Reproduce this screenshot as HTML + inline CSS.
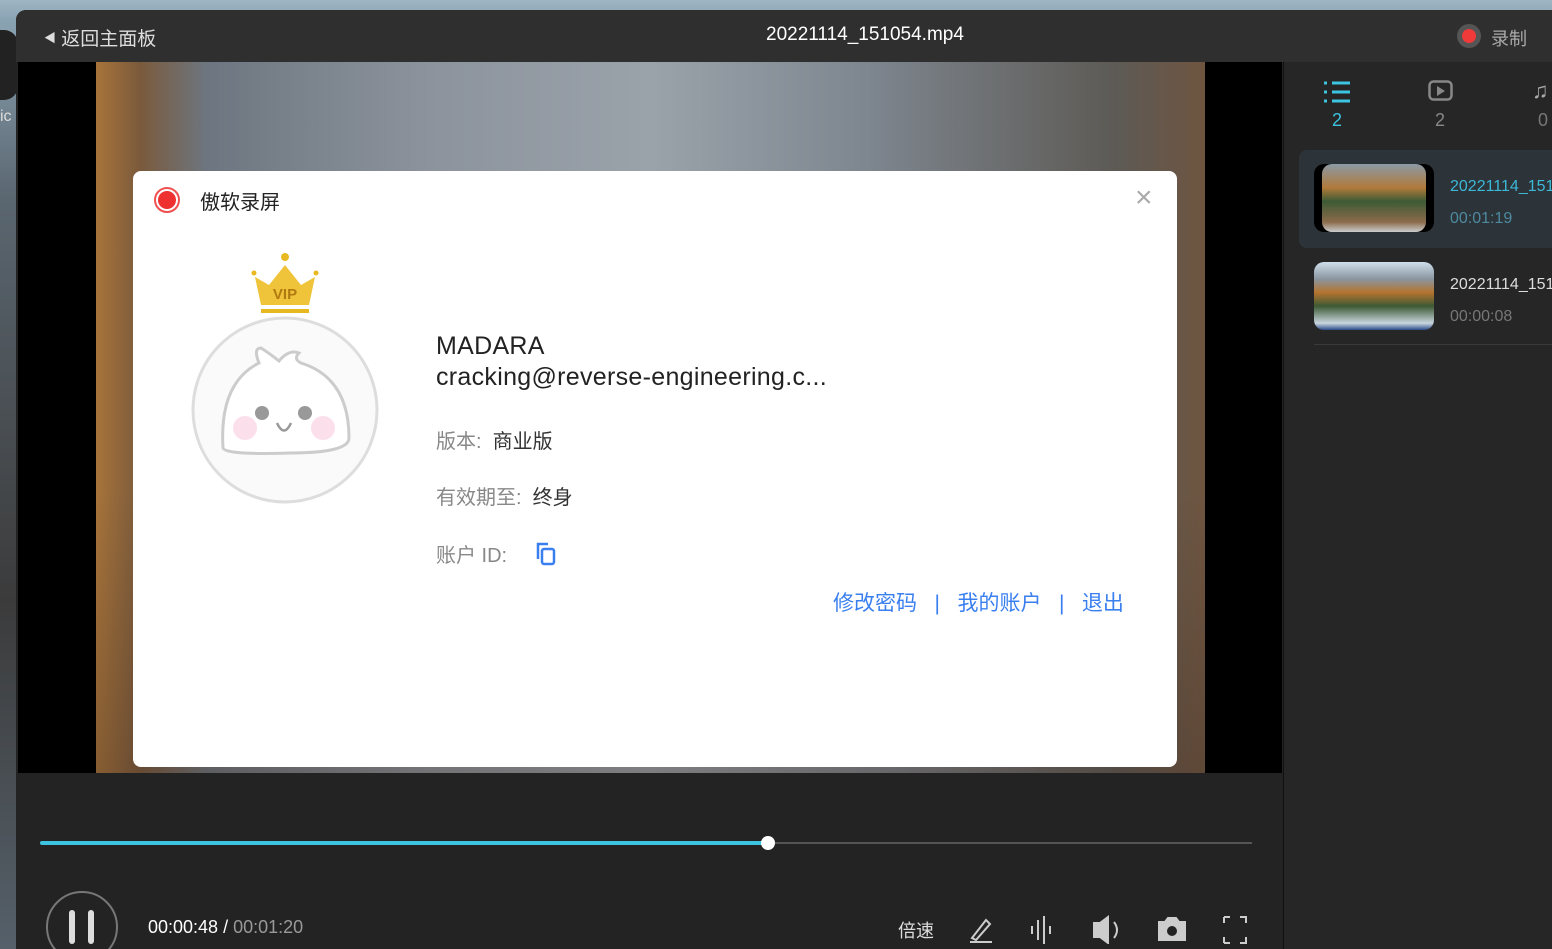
<!DOCTYPE html>
<html><head><meta charset="utf-8"><style>
*{margin:0;padding:0;box-sizing:border-box}
body{width:1552px;height:949px;overflow:hidden;position:relative;font-family:"Liberation Sans","Noto Sans CJK SC",sans-serif;background:linear-gradient(180deg,#9fb6c4 0,#8aa3b2 20px,#5a6670 200px,#3b3b3b 600px,#55606a 949px)}
.abs{position:absolute}
.win{left:16px;top:10px;width:1536px;height:939px;background:#232323;border-radius:10px 0 0 0;overflow:hidden}
.title{left:0;top:0;width:1536px;height:52px;background:#2f2f2f}
.video{left:2px;top:52px;width:1264px;height:711px;background:#000}
.img{left:78px;top:0;width:1109px;height:711px;background:
linear-gradient(180deg,rgba(0,0,0,0) 0,rgba(0,0,0,0) 60%,rgba(60,40,30,.3) 100%),
linear-gradient(90deg,#a8743a 0,#7a5a3c 4%,#6d7680 10%,#8c939c 30%,#9aa2aa 50%,#7d858e 70%,#5d5a55 92%,#6e5540 100%);}
.side{left:1267px;top:52px;width:269px;height:887px;background:#262626;border-left:1px solid #111}
.modal{left:133px;top:171px;width:1044px;height:596px;background:#fff;border-radius:8px}
.t{white-space:nowrap}
</style></head><body>
<div class="abs" style="left:0;top:30px;width:18px;height:70px;background:#222;border-radius:0 14px 14px 0"></div>
<div class="abs t" style="left:0;top:108px;color:#ddd;font-size:16px">ic</div>
<div class="abs win">
 <div class="abs title">
  <div class="abs t" style="left:28px;top:14px;color:#ddd;font-size:19px"><span style="font-size:12px;vertical-align:3px">◀</span> 返回主面板</div>
  <div class="abs t" style="left:750px;top:14px;color:#fff;font-size:19px">20221114_151054.mp4</div>
  <div class="abs" style="left:1441px;top:14px;width:24px;height:24px;border-radius:50%;background:#555"></div>
  <div class="abs" style="left:1446px;top:19px;width:14px;height:14px;border-radius:50%;background:#f03a3a"></div>
  <div class="abs t" style="left:1475px;top:15px;color:#aaa;font-size:18px">录制</div>
 </div>
 <div class="abs video"><div class="abs img"></div></div>
 <div class="abs" style="left:24px;top:831px;width:728px;height:4px;background:#3cc4e0;border-radius:2px"></div>
 <div class="abs" style="left:752px;top:832px;width:484px;height:2px;background:#555"></div>
 <div class="abs" style="left:745px;top:826px;width:14px;height:14px;border-radius:50%;background:#fff"></div>
 <div class="abs" style="left:30px;top:881px;width:72px;height:72px;border-radius:50%;border:2px solid #777"></div>
 <div class="abs" style="left:53px;top:900px;width:6px;height:34px;background:#ddd;border-radius:3px"></div>
 <div class="abs" style="left:72px;top:900px;width:6px;height:34px;background:#ddd;border-radius:3px"></div>
 <div class="abs t" style="left:132px;top:907px;font-size:18px;color:#fff">00:00:48 / <span style="color:#999">00:01:20</span></div>
 <div class="abs t" style="left:882px;top:907px;font-size:18px;color:#ddd">倍速</div>
 <svg class="abs" style="left:950px;top:900px" width="290" height="34" viewBox="0 0 290 34" fill="none" stroke="#ccc" stroke-width="2">
  <path d="M6 28 L20 10 L24 14 L10 30 Z M4 32 H26"/>
  <path d="M72 10 V30 M78 6 V34 M66 16 V24 M84 16 V24"/>
  <path d="M128 13 H134 L142 7 V33 L134 27 H128 Z" fill="#ccc"/><path d="M148 12 Q154 20 148 28"/>
  <path d="M193 12 H199 L202 8 H210 L213 12 H219 V30 H193 Z" fill="#ccc"/><circle cx="206" cy="21" r="5" fill="#232323" stroke="none"/>
  <path d="M258 7 H264 M258 7 V13 M274 7 H280 V13 M258 33 H264 M258 33 V27 M280 27 V33 H274"/>
 </svg>
 <div class="abs side">
  <svg class="abs" style="left:40px;top:18px" width="30" height="24" viewBox="0 0 30 24" stroke="#3cc4e0" stroke-width="3"><path d="M0 3H3M8 3H26M0 12H3M8 12H26M0 21H3M8 21H26"/></svg>
  <div class="abs t" style="left:48px;top:48px;color:#3cc4e0;font-size:18px">2</div>
  <svg class="abs" style="left:144px;top:18px" width="26" height="22" viewBox="0 0 26 22"><rect x="1.5" y="1.5" width="22" height="18" rx="4" fill="none" stroke="#888" stroke-width="2.5"/><path d="M9 6L17 11L9 16Z" fill="#888"/></svg>
  <div class="abs t" style="left:151px;top:48px;color:#888;font-size:18px">2</div>
  <div class="abs t" style="left:248px;top:16px;color:#aaa;font-size:22px">♫</div>
  <div class="abs t" style="left:254px;top:48px;color:#777;font-size:18px">0</div>
  <div class="abs" style="left:15px;top:88px;width:260px;height:98px;background:#2d3439;border-radius:8px"></div>
  <div class="abs" style="left:30px;top:102px;width:120px;height:68px;border-radius:10px;background:#000"></div>
  <div class="abs" style="left:38px;top:102px;width:104px;height:68px;border-radius:10px;background:linear-gradient(180deg,#8c9aa6 0,#b07a3a 35%,#3d5a35 55%,#8a6a4a 85%,#ccc 100%)"></div>
  <div class="abs t" style="left:166px;top:116px;color:#3cb8d8;font-size:16px">20221114_151</div>
  <div class="abs t" style="left:166px;top:148px;color:#4d8aa0;font-size:16px">00:01:19</div>
  <div class="abs" style="left:30px;top:200px;width:120px;height:68px;border-radius:10px;background:linear-gradient(180deg,#cfe0ec 0,#8a95a0 25%,#b5742e 45%,#3d5a35 65%,#c8d5de 90%,#2a4a8a 100%)"></div>
  <div class="abs t" style="left:166px;top:214px;color:#ddd;font-size:16px">20221114_151</div>
  <div class="abs t" style="left:166px;top:246px;color:#777;font-size:16px">00:00:08</div>
  <div class="abs" style="left:30px;top:282px;width:240px;height:1px;background:#3a3a3a"></div>
 </div>
</div>
<div class="abs modal">
 <div class="abs" style="left:21px;top:16px;width:26px;height:26px;border-radius:50%;border:2px solid #f05050"></div>
 <div class="abs" style="left:25px;top:20px;width:18px;height:18px;border-radius:50%;background:#ee3030"></div>
 <div class="abs t" style="left:67px;top:15px;font-size:20px;color:#222">傲软录屏</div>
 <div class="abs t" style="left:1002px;top:10px;font-size:30px;color:#aaa;font-weight:300">×</div>
 <svg class="abs" style="left:56px;top:82px" width="192" height="252" viewBox="0 0 192 252">
  <circle cx="96" cy="157" r="92" fill="#fafafa" stroke="#ddd" stroke-width="3"/>
  <path d="M34 195 Q30 130 70 110 Q64 95 72 95 Q80 100 90 108 Q100 96 110 100 Q104 106 112 110 Q160 125 160 185 Q160 200 100 200 Q36 202 34 195Z" fill="#fff" stroke="#ccc" stroke-width="3"/>
  <circle cx="73" cy="160" r="7" fill="#999"/><circle cx="116" cy="160" r="7" fill="#999"/>
  <circle cx="56" cy="175" r="12" fill="#fbe0ec"/><circle cx="134" cy="175" r="12" fill="#fbe0ec"/>
  <path d="M88 170 Q95 185 102 170" stroke="#999" stroke-width="2.5" fill="none"/>
  <circle cx="96" cy="4" r="4" fill="#e8b820"/>
  <circle cx="65" cy="20" r="2.5" fill="#e8b820"/><circle cx="127" cy="20" r="2.5" fill="#e8b820"/>
  <path d="M66 24 L80 32 L96 12 L112 32 L126 24 L120 52 H72 Z" fill="#f0c43a"/>
  <rect x="72" y="56" width="48" height="4" fill="#e8b820"/>
  <text x="96" y="46" font-size="15" font-weight="bold" fill="#b07a10" text-anchor="middle" font-family="Liberation Sans">VIP</text>
 </svg>
 <div class="abs t" style="left:303px;top:161px;font-size:25px;color:#222;letter-spacing:.3px">MADARA</div>
 <div class="abs t" style="left:303px;top:192px;font-size:25px;color:#222;letter-spacing:.3px">cracking@reverse-engineering.c...</div>
 <div class="abs t" style="left:303px;top:254px;font-size:20px;color:#888">版本: &nbsp;<span style="color:#333">商业版</span></div>
 <div class="abs t" style="left:303px;top:310px;font-size:20px;color:#888">有效期至: &nbsp;<span style="color:#333">终身</span></div>
 <div class="abs t" style="left:303px;top:368px;font-size:20px;color:#888">账户 ID:</div>
 <svg class="abs" style="left:401px;top:370px" width="24" height="26" viewBox="0 0 24 26" fill="none" stroke="#3a7ff0" stroke-width="2.5"><path d="M4 18V3H14"/><rect x="8" y="8" width="12" height="15" rx="2"/></svg>
 <div class="abs t" style="left:700px;top:416px;font-size:21px;color:#3a7ff0">修改密码 &nbsp;&nbsp;| &nbsp;&nbsp;我的账户 &nbsp;&nbsp;| &nbsp;&nbsp;退出</div>
</div>
</body></html>
